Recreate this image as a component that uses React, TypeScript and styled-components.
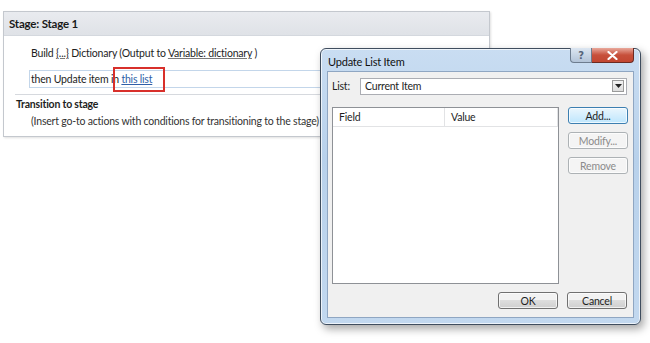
import React from "react";
import styled, { createGlobalStyle } from "styled-components";

const GlobalStyle = createGlobalStyle`
  html, body {
    margin: 0;
    padding: 0;
    background: #ffffff;
  }
  body {
    font-family: Lato, "Noto Sans", sans-serif;
    font-size: 10.5px;
    letter-spacing: -0.2px;
    color: #1e1e1e;
  }
`;

export default function App() {
  return (
    <>
      <GlobalStyle />
      <Canvas>
        <StagePanel>
          <StageHeader>Stage: Stage 1</StageHeader>
          <StageBody>
            <ActionLine>
              Build <PlainLink>{"{...}"}</PlainLink> Dictionary (Output to{" "}
              <PlainLink>Variable: dictionary</PlainLink> )
            </ActionLine>
            <ActionBox>
              then Update item in{" "}
              <Highlight>
                <BlueLink>this list</BlueLink>
              </Highlight>
            </ActionBox>
          </StageBody>
          <Transition>
            <SectionTitle>Transition to stage</SectionTitle>
            <Hint>
              (Insert go-to actions with conditions for transitioning to the
              stage)
            </Hint>
          </Transition>
        </StagePanel>

        <Dialog>
          <TitleBar>
            <DialogTitle>Update List Item</DialogTitle>
            <CaptionButtons>
              <CaptionBtn>?</CaptionBtn>
              <CloseBtn>
                <svg width="11" height="9" viewBox="0 0 11 9">
                  <path
                    d="M1.5 1 L9.5 8 M9.5 1 L1.5 8"
                    stroke="#ffffff"
                    strokeWidth="2.2"
                    strokeLinecap="round"
                  />
                </svg>
              </CloseBtn>
            </CaptionButtons>
          </TitleBar>
          <Client>
            <ListRow>
              <FieldLabel>List:</FieldLabel>
              <Combo>
                <ComboText>Current Item</ComboText>
                <ComboArrow>
                  <svg width="7" height="4" viewBox="0 0 7 4">
                    <path d="M0 0 H7 L3.5 4 Z" fill="#222" />
                  </svg>
                </ComboArrow>
              </Combo>
            </ListRow>
            <MainArea>
              <ListView>
                <ListHeader>
                  <HeaderCell $width={113}>Field</HeaderCell>
                  <HeaderCell $width={114}>Value</HeaderCell>
                </ListHeader>
              </ListView>
              <SideButtons>
                <DlgButton $focused>Add...</DlgButton>
                <DlgButton disabled>Modify...</DlgButton>
                <DlgButton disabled>Remove</DlgButton>
              </SideButtons>
            </MainArea>
            <Footer>
              <DlgButton>OK</DlgButton>
              <DlgButton>Cancel</DlgButton>
            </Footer>
          </Client>
        </Dialog>
      </Canvas>
    </>
  );
}

const Canvas = styled.div`
  position: relative;
  width: 650px;
  height: 343px;
  overflow: hidden;
  padding: 11px 0 0 3px;
  box-sizing: border-box;
`;

const StagePanel = styled.div`
  width: 487px;
  border: 1px solid #c4c8ce;
  box-shadow: 1px 1px 2px rgba(0, 0, 0, 0.12);
  background: #ffffff;
  box-sizing: border-box;
`;

const StageHeader = styled.div`
  height: 23px;
  display: flex;
  align-items: center;
  padding-left: 5px;
  background: linear-gradient(#e9ebef, #dfe2e7);
  border-bottom: 1px solid #d4d8de;
  font-weight: bold;
  font-size: 11.5px;
  color: #1a1a1a;
`;

const StageBody = styled.div`
  padding: 10px 0 6px 25px;
  display: flex;
  flex-direction: column;
  gap: 10px;
`;

const ActionLine = styled.div`
  padding-left: 2px;
  height: 14px;
  line-height: 14px;
`;

const PlainLink = styled.span`
  text-decoration: underline;
  text-decoration-color: #7a7a7a;
`;

const ActionBox = styled.div`
  height: 18px;
  width: 450px;
  border: 1px solid #c3d6ea;
  box-sizing: border-box;
  display: flex;
  align-items: center;
  padding-left: 1px;
  white-space: pre;
`;

const Highlight = styled.span`
  position: relative;

  &::after {
    content: "";
    position: absolute;
    left: -8px;
    right: -13px;
    top: -6px;
    bottom: -7px;
    border: 2px solid #d8302b;
  }
`;

const BlueLink = styled.span`
  color: #2f5fa8;
  text-decoration: underline;
`;

const Transition = styled.div`
  margin-left: 11px;
  border-top: 1px solid #d6d9de;
  padding: 2px 0 8px 1px;
  display: flex;
  flex-direction: column;
  gap: 3px;
`;

const SectionTitle = styled.div`
  font-weight: bold;
  height: 14px;
  line-height: 14px;
`;

const Hint = styled.div`
  padding-left: 15px;
  height: 14px;
  line-height: 14px;
  color: #333;
`;

const Dialog = styled.div`
  position: absolute;
  left: 320px;
  top: 48px;
  width: 321px;
  height: 277px;
  box-sizing: border-box;
  border: 1px solid #3f4d5e;
  border-radius: 6px;
  background: linear-gradient(#c9ddf2, #b8d1eb 40%, #c2d8ef);
  box-shadow: 3px 4px 8px rgba(0, 0, 0, 0.35), inset 0 0 0 1px rgba(255, 255, 255, 0.7);
  padding: 0 6px 6px 6px;
  display: flex;
  flex-direction: column;
`;

const TitleBar = styled.div`
  height: 24px;
  display: flex;
  align-items: flex-start;
  justify-content: space-between;
`;

const DialogTitle = styled.div`
  padding-top: 6px;
  padding-left: 1px;
  font-size: 11px;
  color: #111;
`;

const CaptionButtons = styled.div`
  display: flex;
  margin-top: -1px;
`;

const CaptionBtn = styled.div`
  width: 20px;
  height: 14px;
  display: flex;
  align-items: center;
  justify-content: center;
  border: 1px solid #6d7c8e;
  border-top: none;
  border-radius: 0 0 0 4px;
  background: linear-gradient(#dce6f1, #b3c4d8);
  color: #56647a;
  font-family: "DejaVu Sans", sans-serif;
  font-size: 10px;
  font-weight: bold;
`;

const CloseBtn = styled.div`
  width: 41px;
  height: 14px;
  display: flex;
  align-items: center;
  justify-content: center;
  border: 1px solid #6b2a22;
  border-top: none;
  border-left: none;
  border-radius: 0 0 4px 0;
  background: linear-gradient(#e9a99c, #c7503b 50%, #c24631);
`;

const Client = styled.div`
  flex: 1;
  background: #f0f0f0;
  border: 1px solid #8fa6c2;
  padding: 5px 6px 8px 4px;
  display: flex;
  flex-direction: column;
`;

const ListRow = styled.div`
  display: flex;
  align-items: center;
  height: 18px;
`;

const FieldLabel = styled.div`
  width: 28px;
`;

const Combo = styled.div`
  flex: 1;
  height: 17px;
  background: #ffffff;
  border: 1px solid #abadb3;
  box-sizing: border-box;
  display: flex;
  align-items: center;
  justify-content: space-between;
  padding: 0 2px 0 4px;
`;

const ComboText = styled.span`
  color: #1e1e1e;
`;

const ComboArrow = styled.div`
  width: 12px;
  height: 12px;
  display: flex;
  align-items: center;
  justify-content: center;
  background: linear-gradient(#f3f3f3, #dcdcdc);
  border: 1px solid #9a9a9a;
  box-sizing: border-box;
`;

const MainArea = styled.div`
  display: flex;
  gap: 9px;
  margin-top: 12px;
  flex: 1;
`;

const ListView = styled.div`
  width: 227px;
  height: 177px;
  box-sizing: border-box;
  background: #ffffff;
  border: 1px solid #8e9196;
`;

const ListHeader = styled.div`
  display: flex;
  height: 18px;
  border-bottom: 1px solid #e2e3e5;
`;

const HeaderCell = styled.div<{ $width: number }>`
  width: ${(p) => p.$width}px;
  box-sizing: border-box;
  display: flex;
  align-items: center;
  padding-left: 6px;
  border-right: 1px solid #e2e3e5;
  color: #1e1e1e;
`;

const SideButtons = styled.div`
  display: flex;
  flex-direction: column;
  gap: 8px;
`;

const DlgButton = styled.button<{ $focused?: boolean }>`
  width: 60px;
  height: 17px;
  box-sizing: border-box;
  padding: 0;
  font-family: inherit;
  font-size: 10.5px;
  letter-spacing: inherit;
  border-radius: 3px;
  color: #1e1e1e;
  border: 1px solid ${(p) => (p.$focused ? "#3c7fb1" : "#707070")};
  background: ${(p) =>
    p.$focused
      ? "linear-gradient(#eaf6fd, #bee6fd)"
      : "linear-gradient(#f2f2f2 50%, #dddddd 50%, #cfcfcf)"};
  box-shadow: inset 0 0 0 1px rgba(255, 255, 255, 0.7);

  &:disabled {
    border-color: #adb2b5;
    background: #f4f4f4;
    color: #8b8b8b;
  }
`;

const Footer = styled.div`
  display: flex;
  justify-content: flex-end;
  gap: 9px;
  margin-top: 8px;
`;
